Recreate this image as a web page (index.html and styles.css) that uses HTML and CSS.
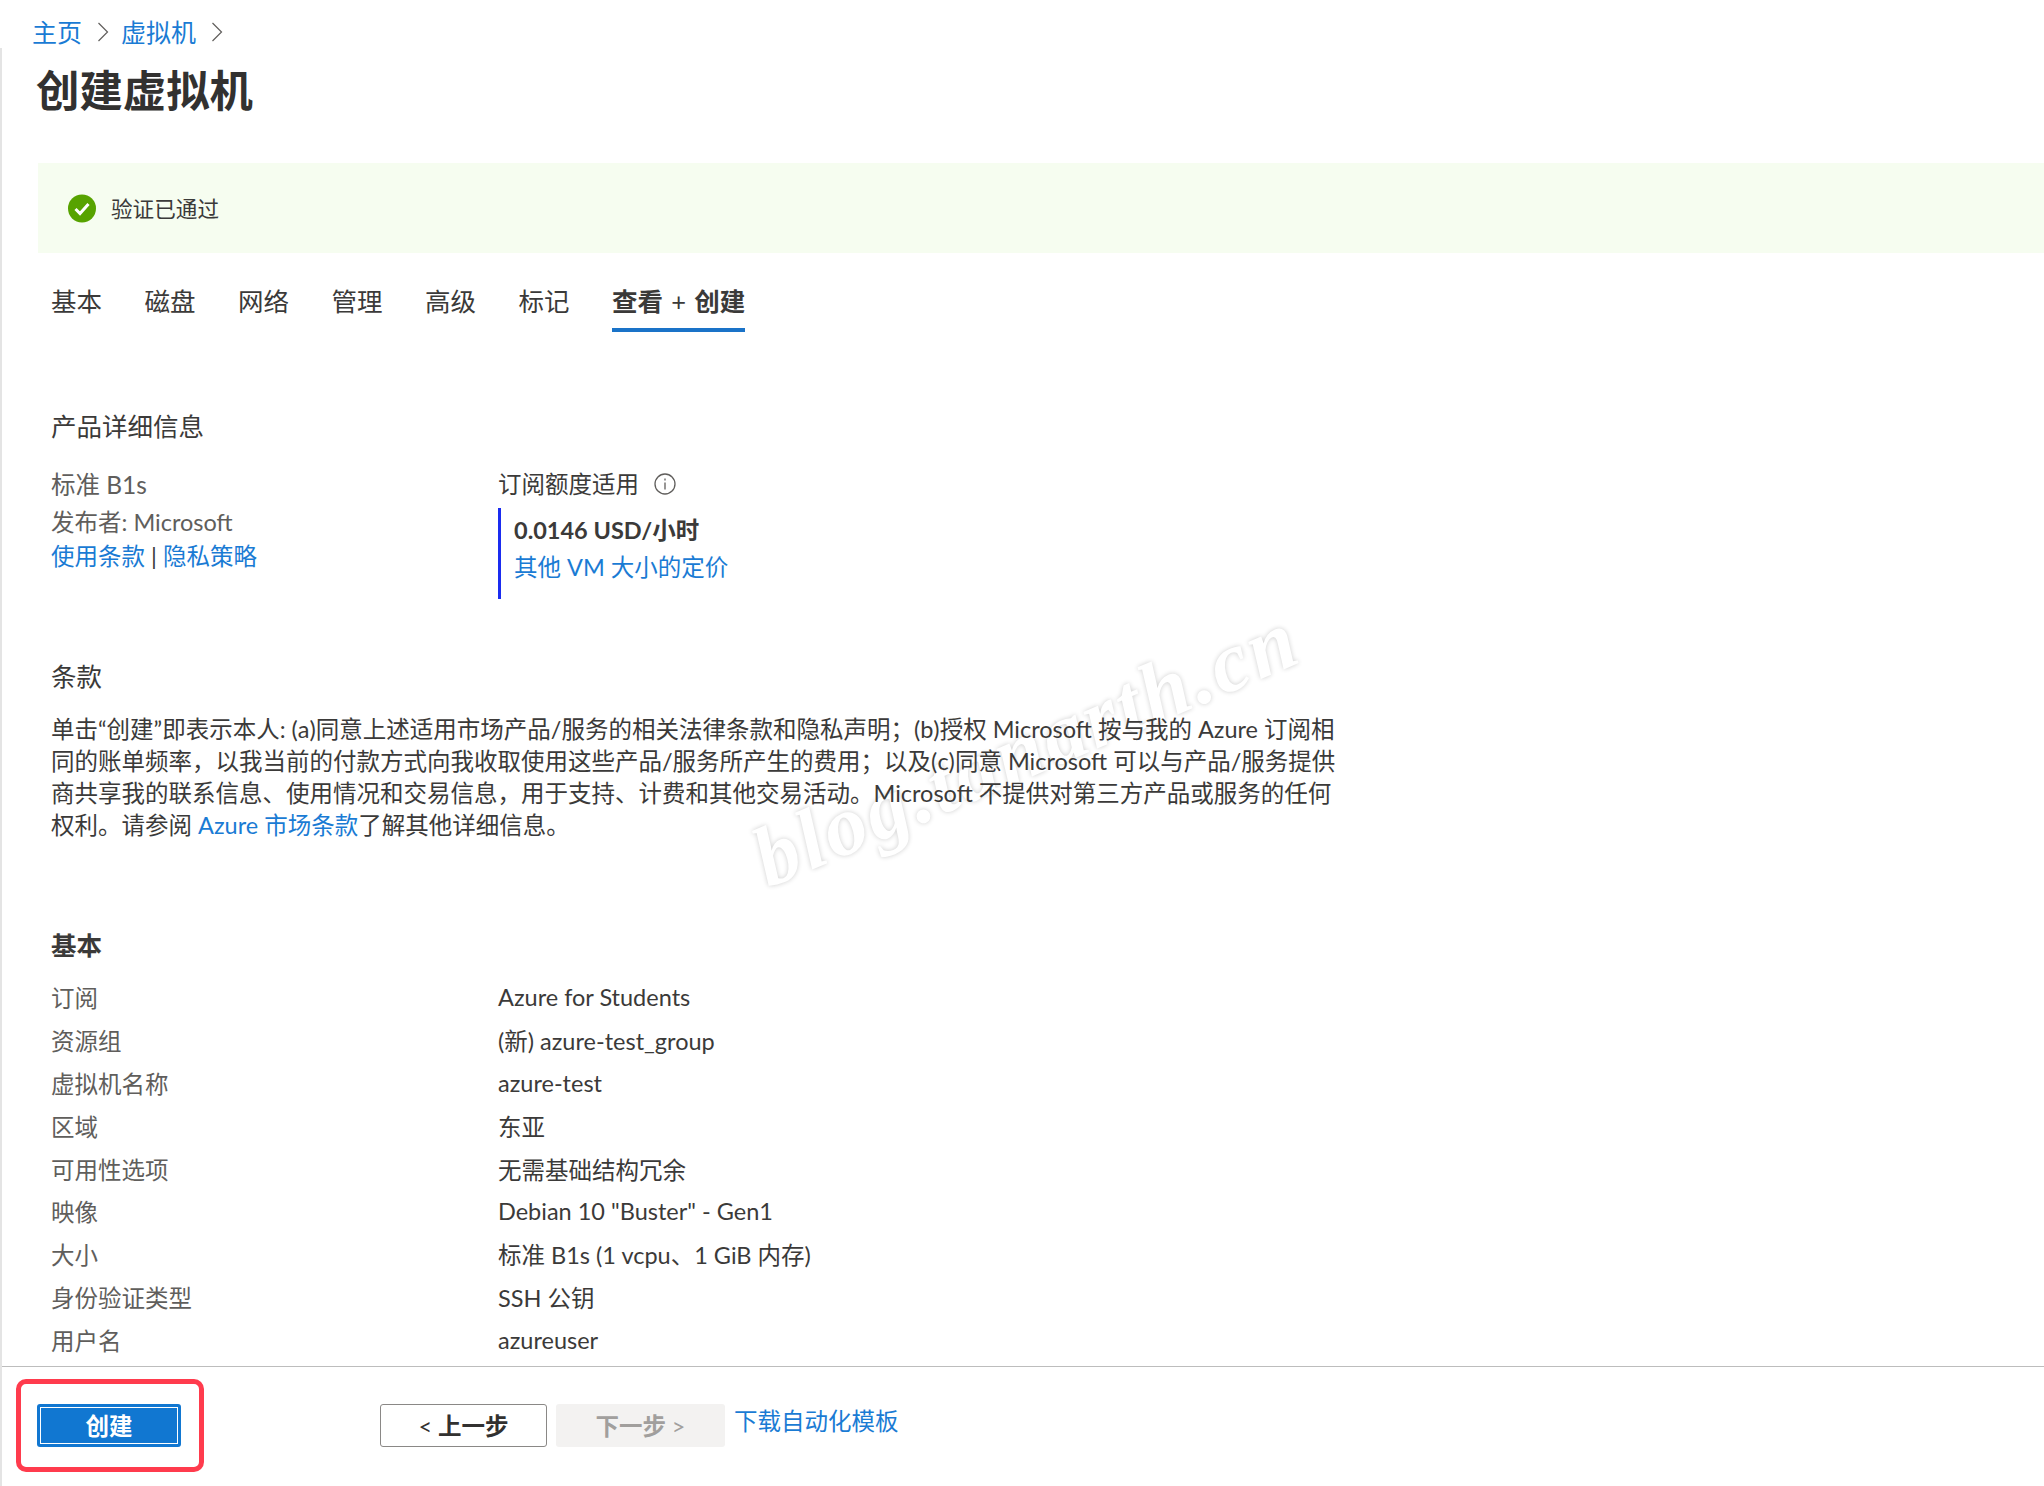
FILE: index.html
```html
<!DOCTYPE html>
<html lang="zh-CN">
<head>
<meta charset="utf-8">
<title>创建虚拟机</title>
<link rel="stylesheet" href="styles.css">
</head>
<body>
<div class="page">
  <nav class="crumbs">
    <a class="link">主页</a>
    <svg class="chev" viewBox="0 0 12 20"><path d="M1.5 1l9 9-9 9"/></svg>
    <a class="link">虚拟机</a>
    <svg class="chev" viewBox="0 0 12 20"><path d="M1.5 1l9 9-9 9"/></svg>
  </nav>
  <div class="body">
    <main class="main">
      <h1 class="title">创建虚拟机</h1>
      <div class="banner">
        <svg class="check" viewBox="0 0 28 28"><circle cx="14" cy="14" r="14" fill="#57a300"/><path d="M7.5 14.5l4.5 4.5 8.5-9.5" fill="none" stroke="#fff" stroke-width="3"/></svg>
        <span class="banner-text">验证已通过</span>
      </div>
      <div class="tabs">
        <span class="tab">基本</span>
        <span class="tab">磁盘</span>
        <span class="tab">网络</span>
        <span class="tab">管理</span>
        <span class="tab">高级</span>
        <span class="tab">标记</span>
        <span class="tab active">查看 <span class="plus">+</span> 创建</span>
      </div>
      <div class="watermark">blog.tanarth.cn</div>
      <section class="content">
        <h2 class="heading">产品详细信息</h2>
        <div class="product">
          <div class="col-left">
            <div class="sku">标准 B1s</div>
            <div class="publisher">发布者: Microsoft</div>
            <div class="terms-links"><a class="link">使用条款</a> | <a class="link">隐私策略</a></div>
          </div>
          <div class="col-right">
            <div class="quota">订阅额度适用
              <svg class="info" viewBox="0 0 22 22"><circle cx="11" cy="11" r="10"/><path d="M11 9.5v7M11 5.5v2"/></svg>
            </div>
            <div class="price">
              <div class="amount">0.0146 USD/小时</div>
              <a class="link">其他 VM 大小的定价</a>
            </div>
          </div>
        </div>
        <h2 class="heading terms-head">条款</h2>
        <p class="para">单击“创建”即表示本人: (a)同意上述适用市场产品/服务的相关法律条款和隐私声明；(b)授权 Microsoft 按与我的 Azure 订阅相<br>同的账单频率，以我当前的付款方式向我收取使用这些产品/服务所产生的费用；以及(c)同意 Microsoft 可以与产品/服务提供<br>商共享我的联系信息、使用情况和交易信息，用于支持、计费和其他交易活动。Microsoft 不提供对第三方产品或服务的任何<br>权利。请参阅 <a class="link">Azure 市场条款</a>了解其他详细信息。</p>
        <h2 class="heading basics">基本</h2>
        <dl class="rows">
          <dt>订阅</dt><dd>Azure for Students</dd>
          <dt>资源组</dt><dd>(新) azure-test_group</dd>
          <dt>虚拟机名称</dt><dd>azure-test</dd>
          <dt>区域</dt><dd>东亚</dd>
          <dt>可用性选项</dt><dd>无需基础结构冗余</dd>
          <dt>映像</dt><dd>Debian 10 "Buster" - Gen1</dd>
          <dt>大小</dt><dd>标准 B1s (1 vcpu、1 GiB 内存)</dd>
          <dt>身份验证类型</dt><dd>SSH 公钥</dd>
          <dt>用户名</dt><dd>azureuser</dd>
        </dl>
      </section>
    </main>
    <footer class="footer">
      <div class="create-wrap"><button class="btn primary">创建</button></div>
      <button class="btn prev"><span class="angle">&lt;</span> 上一步</button>
      <button class="btn next">下一步 <span class="angle">&gt;</span></button>
      <a class="link dl">下载自动化模板</a>
    </footer>
  </div>
</div>
</body>
</html>
```
FILE: styles.css
```css
* { box-sizing: border-box; }
html, body { margin: 0; padding: 0; background: #fff; }
body {
  font-family: "Lato", "Noto Sans CJK SC", sans-serif;
  font-size: 23.5px;
  color: #3b3a39;
}
.page { width: 2044px; height: 1486px; display: flex; flex-direction: column; overflow: hidden; }
.link { color: #1a7bd4; text-decoration: none; }
.crumbs { height: 48px; padding: 16px 0 0 32px; display: flex; align-items: center; gap: 15px; font-size: 25px; line-height: 24px; flex: none; }
.chev { width: 12px; height: 20px; margin-right: -3px; fill: none; stroke: #605e5c; stroke-width: 1.2; }
.body { flex: 1; min-height: 0; display: flex; flex-direction: column; border-left: 2px solid #e4e4e4; }
.main { flex: 1; min-height: 0; position: relative; overflow: hidden; }
.title { margin: 11px 0 0; padding-left: 34px; font-size: 43.4px; line-height: 62px; font-weight: 700; color: #323130; }
.banner { margin: 42px 0 0 36px; height: 90px; padding-left: 30px; display: flex; align-items: center; gap: 15px; background: #f6fdf0; font-size: 21.6px; }
.banner-text { margin-top: -2px; }
.check { width: 28px; height: 29px; flex: none; }
.tabs { margin-top: 35px; padding-left: 49px; display: flex; gap: 42.5px; font-size: 25.5px; }
.tab { height: 44px; line-height: 26px; border-bottom: 4px solid transparent; white-space: pre; }
.active { font-weight: 700; border-bottom-color: #1a73c8; word-spacing: 2px; }
.plus { font-weight: 400; }
.content { padding-left: 49px; position: relative; z-index: 1; }
.heading { margin: 0; font-size: 25.5px; font-weight: 400; line-height: 34px; }
.content > .heading:first-child { margin-top: 77px; }
.product { margin-top: 25px; display: grid; grid-template-columns: 447px 1fr; }
.col-left { color: #605e5c; }
.sku { font-size: 24.5px; line-height: 34px; }
.publisher { margin-top: 4px; line-height: 32px; }
.terms-links { line-height: 34px; color: #3b3a39; margin-top: 1px; }
.quota { display: flex; align-items: center; gap: 15px; line-height: 34px; margin-top: -1px; }
.info { width: 22px; height: 22px; fill: none; stroke: #605e5c; stroke-width: 1.3; }
.price { margin-top: 7px; width: 300px; height: 91px; padding: 3px 0 0 13px; border-left: 3px solid #1a2cf0; }
.amount { font-weight: 700; line-height: 38px; }
.terms-head { margin-top: 60px; }
.para { margin: 19.5px 0 0; line-height: 32px; white-space: nowrap; }
.basics { margin-top: 87.5px; font-weight: 700; }
.rows { margin: 13.5px 0 0; display: grid; grid-template-columns: 447px 1fr; grid-auto-rows: 42.9px; align-items: center; }
.rows dt { color: #605e5c; }
.rows dd { margin: 0; }
.watermark { position: absolute; left: 772px; top: 768px; transform: rotate(-23deg); transform-origin: left bottom; font-family: "Liberation Serif", serif; font-style: italic; font-weight: 700; font-size: 85px; line-height: 1; color: #fff; letter-spacing: 3px; text-shadow: 0 0 5px rgba(0,0,0,.2); pointer-events: none; white-space: nowrap; }
.footer { flex: none; height: 120px; border-top: 1px solid #bdbdbd; padding-top: 37px; display: flex; align-items: flex-start; position: relative; }
.btn { height: 43px; border-radius: 3px; font: 700 23.5px "Lato", "Noto Sans CJK SC", sans-serif; padding: 0 0 2px; }
.angle { font-weight: 400; }
.create-wrap { margin: -25px 0 0 14px; width: 188px; height: 93px; border: 5px solid #ff3b4d; border-radius: 10px; padding: 20px 0 0 16px; flex: none; }
.primary { width: 144px; background: #1177d1; color: #fff; border: 0; outline: 1.5px solid #fff; outline-offset: -4px; }
.prev { margin-left: 176px; width: 167px; background: #fff; border: 1px solid #8a8886; color: #323130; }
.next { margin-left: 9px; width: 169px; background: #f3f2f1; border: 0; color: #a19f9d; }
.dl { margin: 0 0 0 9px; line-height: 34px; }
```
